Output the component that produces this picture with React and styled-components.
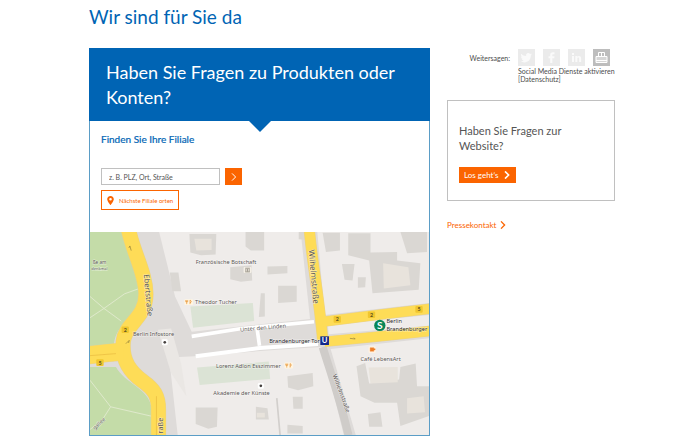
import React, { useState } from 'react';
import styled, { createGlobalStyle, ThemeProvider } from 'styled-components';

const theme = {
  colors: {
    primary: '#0064b4',
    accent: '#fb6400',
    text: '#555',
    border: '#c0c0c0',
    frame: '#5b9dc6',
    muted: '#ebebeb',
  },
};

const GlobalStyle = createGlobalStyle`
  * { box-sizing: border-box; }
  body {
    margin: 0;
    background: #fff;
    font-family: Lato, "Noto Sans", sans-serif;
    color: #4c4c4c;
  }
  button, input { font-family: inherit; }
`;

const Page = styled.div`
  padding: 4px 85px 7px 89px;
`;

const PageTitle = styled.h1`
  margin: 0 0 19px;
  font-size: 19px;
  font-weight: 400;
  line-height: 25px;
  color: ${p => p.theme.colors.primary};
`;

const Columns = styled.div`
  display: grid;
  grid-template-columns: minmax(0, 1fr) 168px;
  align-items: start;
  gap: 17px;
`;

const Card = styled.main`
  border: 1px solid ${p => p.theme.colors.frame};
  border-top: none;
`;

const CardHeader = styled.header`
  position: relative;
  margin: 0 -1px;
  padding: 12px 17px 11px;
  background: ${p => p.theme.colors.primary};
  &::after {
    content: '';
    position: absolute;
    top: 100%;
    left: 50%;
    margin-left: -11px;
    border: 11px solid transparent;
    border-top-color: ${p => p.theme.colors.primary};
    border-bottom: none;
  }
`;

const CardTitle = styled.h2`
  margin: 0;
  font-size: 18px;
  font-weight: 400;
  line-height: 25px;
  color: #fff;
`;

const Finder = styled.form`
  display: flex;
  flex-direction: column;
  align-items: flex-start;
  padding: 10px 11px 22px;
`;

const FinderLabel = styled.label`
  margin-bottom: 21px;
  font-size: 10px;
  line-height: 16px;
  color: ${p => p.theme.colors.primary};
  -webkit-text-stroke: 0.2px;
`;

const SearchRow = styled.div`
  display: flex;
  gap: 5px;
  margin-bottom: 5px;
`;

const SearchInput = styled.input`
  width: 119px;
  height: 17px;
  padding: 0 7px;
  border: 1px solid ${p => p.theme.colors.border};
  border-radius: 0;
  font-size: 7px;
  color: ${p => p.theme.colors.text};
  &::placeholder {
    color: ${p => p.theme.colors.text};
    opacity: 1;
  }
`;

const SearchButton = styled.button`
  display: flex;
  align-items: center;
  justify-content: center;
  width: 17px;
  height: 17px;
  padding: 0;
  border: none;
  background: ${p => p.theme.colors.accent};
  color: #fff;
  cursor: pointer;
`;

const NearestButton = styled.button`
  display: flex;
  align-items: center;
  gap: 5px;
  height: 20px;
  padding: 0 5px;
  border: 1px solid ${p => p.theme.colors.accent};
  background: #fff;
  font-size: 6px;
  color: ${p => p.theme.colors.accent};
  cursor: pointer;
`;

const MapView = styled.svg`
  display: block;
  width: 100%;
  height: auto;
`;

const Sidebar = styled.aside`
  display: flex;
  flex-direction: column;
`;

const Share = styled.section`
  display: flex;
  justify-content: flex-end;
  gap: 8px;
  margin-bottom: 17px;
  font-size: 7px;
  line-height: 8px;
`;

const ShareLabel = styled.span`
  line-height: 20px;
`;

const ShareBody = styled.div`
  width: 97px;
`;

const ShareIcons = styled.div`
  display: flex;
  gap: 8px;
  padding: 1px 0;
`;

const ShareButton = styled.button`
  display: flex;
  width: 17px;
  height: 17px;
  padding: 0;
  border: none;
  background: ${p => (p.$active ? '#bdbdbd' : p.theme.colors.muted)};
  color: ${p => (p.$active ? '#fff' : '#fafafa')};
  cursor: pointer;
`;

const Notice = styled.p`
  margin: 0;
  white-space: nowrap;
`;

const NoticeLink = styled.a`
  color: inherit;
  text-decoration: none;
`;

const Box = styled.section`
  padding: 22px 11px 17px;
  border: 1px solid ${p => p.theme.colors.border};
`;

const BoxTitle = styled.h2`
  margin: 0 0 14px;
  font-size: 11px;
  font-weight: 400;
  line-height: 15px;
  color: ${p => p.theme.colors.text};
`;

const GoButton = styled.button`
  display: flex;
  align-items: center;
  gap: 4px;
  height: 16px;
  padding: 0 5px;
  border: none;
  background: ${p => p.theme.colors.accent};
  font-size: 8px;
  color: #fff;
  cursor: pointer;
`;

const PressLink = styled.a`
  display: flex;
  align-items: center;
  gap: 3px;
  margin-top: 18px;
  font-size: 8px;
  line-height: 12px;
  color: ${p => p.theme.colors.accent};
  text-decoration: none;
`;

const Chevron = ({ size = 8, width = 1.6 }) => (
  <svg width={size} height={size} viewBox="0 0 8 8" fill="none" stroke="currentColor" strokeWidth={width} aria-hidden="true">
    <path d="M2 0.4 5.6 4 2 7.6" />
  </svg>
);

const Pin = () => (
  <svg width="7" height="9" viewBox="0 0 7 9" fill="currentColor" fillRule="evenodd" aria-hidden="true">
    <path d="M3.500 0C1.500 0 .2 1.400.2 3.200.2 5.200 3.500 9 3.500 9S6.800 5.200 6.800 3.200C6.800 1.400 5.500 0 3.500 0ZM3.500 1.900a1.300 1.300 0 1 1 0 2.600 1.300 1.300 0 0 1 0-2.600Z" />
  </svg>
);

const networks = [
  {
    name: 'Twitter',
    icon: <path fill="currentColor" d="M14 5.200c-.5.2-1 .3-1.400.4.500-.3.800-.8 1-1.300-.5.300-1 .5-1.500.6a2.300 2.300 0 0 0-4 2.100C6 7 4.400 6 3.300 4.700c-.6 1-.3 2.300.7 3-.4 0-.7-.1-1-.3 0 1.100.8 2 1.800 2.300-.3.100-.7.1-1 0 .3.900 1.100 1.600 2.100 1.600-1 .8-2 1.100-3.300 1 4.900 2.900 10.400-.3 10.200-5.700.5-.4.900-.8 1.200-1.400Z" />,
  },
  {
    name: 'Facebook',
    icon: <path fill="currentColor" d="M9.300 14V9.300h1.900l.3-2H9.300V6.200c0-.7.300-1 1-1h1.200V3.300c-2.900-.5-4.300.4-4.300 2.700v1.300H5.500v2h1.700V14Z" />,
  },
  {
    name: 'LinkedIn',
    icon: <path fill="currentColor" d="M4 7h2v6H4ZM4 4h2v2H4ZM7.300 7h1.900v.8c1-1.500 3.900-1.200 3.900 1.400V13h-2V9.700c0-1.500-1.800-1.400-1.800 0V13h-2Z" />,
  },
];

const greens = [
  'M6 6H104C118 70 152 120 160 170C168 235 140 262 108 284C88 302 80 322 78 345L6 350Z',
  'M6 412H84C108 458 182 478 190 530V618H6Z',
];

const roads = [
  { d: 'M122 0C138 72 173 130 174 190C176 266 112 280 106 335C100 395 130 430 165 455C200 480 212 500 212 540V624', w: 43 },
  { d: 'M0 377L60 370L106 366', w: 52 },
  { d: 'M666 0C676 110 695 200 706 330', w: 31 },
  { d: 'M706 276L880 254L1030 237', w: 29 },
  { d: 'M712 336L860 322L1030 304', w: 29 },
];

const blocks = [
  '214 6 640 6 668 268 312 306 262 200',
  '690 6 1026 6 1026 220 712 256',
  '722 286 1026 256 1026 288 724 314',
  '244 384 320 380 600 358 704 352 770 618 270 618',
  '730 358 1026 326 1026 618 806 618',
];

const buildings = [
  '305 12 386 12 384 74 340 76 308 68', '474 6 530 6 530 62 490 62 474 50', '634 6 664 6 664 30 634 28',
  '428 112 492 106 494 152 460 156 428 148', '572 168 628 168 628 216 572 220', '246 128 272 128 280 184 254 184',
  '706 8 758 8 758 62 716 66', '783 10 850 10 850 68 930 66 930 92 1000 100 995 180 856 190 846 92 783 76',
  '940 6 1020 6 1020 66 960 70', '764 102 802 102 796 152 772 150', '812 142 836 142 834 172 812 174',
  '324 534 390 534 388 592 362 598 324 584', '600 440 676 430 678 470 632 482 602 474', '616 502 646 502 646 538 618 538',
  '808 410 834 400 846 462 936 450 940 412 986 402 990 470 1026 470 1026 560 940 590 930 520 862 520 820 500',
  '842 554 880 548 886 592 846 592', '540 110 600 108 600 130 540 134', '505 532 540 536 544 570 505 570',
  '600 586 646 590 646 612 600 612', '520 190 532 190 532 260 514 262',
];

const courtyards = [
  '888 100 964 112 970 166 890 176', '844 414 932 412 932 458 850 462', '960 506 1010 500 1014 548 960 552',
  '320 26 372 26 372 60 326 62', '508 550 532 550 532 564 508 564',
];

const labels = [
  { text: 'Französische Botschaft', x: 324, y: 101 },
  { text: 'Theodor Tucher', x: 322, y: 224 },
  { text: 'Berlin Infostore', x: 135, y: 319 },
  { text: 'Lorenz Adlon Esszimmer', x: 385, y: 415 },
  { text: 'Akademie der Künste', x: 377, y: 497 },
  { text: 'Brandenburger Tor', x: 545, y: 339, dark: true },
  { text: 'Café LebensArt', x: 820, y: 393 },
  { text: 'Berlin', x: 898, y: 281, dark: true },
  { text: 'Brandenburger', x: 898, y: 303, dark: true },
  { text: 'Unter den Linden', x: 458, y: 306, rotate: -5 },
  { text: 'Ebertstraße', x: 168, y: 134, rotate: 85, size: 23 },
  { text: 'Wilhelmstraße', x: 664, y: 60, rotate: 85, size: 24 },
  { text: 'Wilhelmstraße', x: 736, y: 436, rotate: 70, size: 18 },
  { text: 'raße', x: 226, y: 612, rotate: -90, size: 22 },
  { text: 'gallee', x: 20, y: 602, rotate: -42, size: 16 },
  { text: 'ße am', x: 14, y: 102, size: 14 },
  { text: 'denkmal', x: 10, y: 121, size: 12 },
];

const shields = [[112, 300, '2'], [36, 399, '5'], [750, 269, '2'], [853, 255, '2'], [996, 239, '5']];

const CityMap = () => (
  <MapView viewBox="6 6 1020 612" role="img" aria-label="Karte von Berlin">
    <rect x="6" y="6" width="1020" height="612" fill="#dedbd9" />
    {blocks.map(b => <polygon key={b} points={b} fill="#efecea" />)}
    {greens.map(g => <path key={g} d={g} fill="#c4dca8" />)}
    <polygon points="308 230 496 220 500 274 316 294" fill="#dbe3d5" />
    <polygon points="328 414 544 396 548 448 336 466" fill="#dbe3d5" />
    <polygon points="210 300 250 296 280 402 296 500 250 430" fill="#eae7e4" />
    {buildings.map(b => <polygon key={b} points={b} fill="#dad7d3" />)}
    {courtyards.map(c => <polygon key={c} points={c} fill="#e8e3dc" />)}
    <g fill="none" stroke="#dfe9cc" strokeWidth="3">
      <path d="M6 200L48 236L100 274M48 236L110 192L160 174M6 264L48 236" />
      <path d="M6 452L68 532L190 560M68 532L40 576L6 600" />
    </g>
    <path d="M706 352C730 430 756 500 784 618" fill="none" stroke="#cfccc9" strokeWidth="24" />
    <path d="M568 506L578 618" fill="none" stroke="#d2cfcc" strokeWidth="5" />
    {roads.map(r => <path key={r.d} d={r.d} fill="none" stroke="#ead287" strokeWidth={r.w + 3} />)}
    {roads.map(r => <path key={r.d} d={r.d} fill="none" stroke="#fedc57" strokeWidth={r.w} />)}
    <path d="M6 378L84 372M206 500V618" fill="none" stroke="#e9b93f" strokeWidth="2" />
    <g fill="none" stroke="#fff">
      <path d="M312 320L458 297L680 276M508 292L516 348" strokeWidth="11" />
      <path d="M324 380L516 355L692 343" strokeWidth="12" />
    </g>
    {shields.map(([x, y, n]) => (
      <g key={`${x}-${y}`}>
        <rect x={x - 11} y={y - 10} width="22" height="20" rx="3" fill="#f0c62f" />
        <text x={x} y={y + 6} fontSize="16" fontWeight="700" textAnchor="middle" fill="#5f5320">{n}</text>
      </g>
    ))}
    <g fill="none" stroke="#8e7c3a" strokeWidth="2">
      <path d="M126 48L130 62M126 48L123 54M114 342L124 332L122 340M788 326L804 328L800 324" />
    </g>
    {labels.map(l => (
      <text
        key={`${l.text}-${l.x}`}
        transform={`translate(${l.x} ${l.y}) rotate(${l.rotate || 0})`}
        fontSize={l.size || 17}
        fill={l.dark ? '#28282c' : '#5a5654'}
        stroke="#fff"
        strokeOpacity="0.5"
        strokeWidth="3"
        paintOrder="stroke"
        fontFamily='"Noto Sans", sans-serif'
      >
        {l.text}
      </text>
    ))}
    {[[303, 217], [604, 408]].map(([x, y]) => (
      <g key={x}>
        <rect x={x - 13} y={y - 9} width="26" height="18" rx="3" fill="#fff5e2" />
        <path d={`M${x - 6} ${y - 6}v12M${x - 9} ${y - 6}v5h6v-5M${x + 4} ${y + 6}v-12c5 2 5 7 0 8`} fill="none" stroke="#e7902c" strokeWidth="2" />
      </g>
    ))}
    {[[231, 338], [520, 469]].map(([x, y]) => (
      <g key={x}>
        <rect x={x - 9} y={y - 9} width="18" height="18" rx="4" fill="#fff" />
        <circle cx={x} cy={y} r="4" fill="#45403e" />
      </g>
    ))}
    <rect x="468" y="111" width="24" height="18" rx="3" fill="#f5f0e7" />
    <path d="M473 115H487M475 117V125M480 117V125M485 117V125M473 126H487" stroke="#7a7468" strokeWidth="2" />
    <rect x="844" y="350" width="22" height="20" rx="4" fill="#fff2e2" />
    <path d="M849 354H860V365H849ZM860 357H864V361H860" fill="#ee7f28" stroke="#ee7f28" />
    <circle cx="878" cy="287" r="17" fill="#078658" />
    <text x="878" y="298" fontSize="31" fontWeight="700" textAnchor="middle" fill="#fff">S</text>
    <rect x="699" y="320" width="26" height="26" fill="#14288c" />
    <text x="712" y="341" fontSize="23" fontWeight="700" textAnchor="middle" fill="#fff">U</text>
  </MapView>
);

export default function App() {
  const [query, setQuery] = useState('');

  return (
    <ThemeProvider theme={theme}>
      <GlobalStyle />
      <Page>
        <PageTitle>Wir sind für Sie da</PageTitle>
        <Columns>
          <Card>
            <CardHeader>
              <CardTitle>Haben Sie Fragen zu Produkten oder Konten?</CardTitle>
            </CardHeader>
            <Finder onSubmit={e => e.preventDefault()}>
              <FinderLabel htmlFor="branch">Finden Sie Ihre Filiale</FinderLabel>
              <SearchRow>
                <SearchInput
                  id="branch"
                  value={query}
                  onChange={e => setQuery(e.target.value)}
                  placeholder="z. B. PLZ, Ort, Straße"
                />
                <SearchButton type="submit" aria-label="Suchen">
                  <Chevron width={1} />
                </SearchButton>
              </SearchRow>
              <NearestButton type="button">
                <Pin />
                Nächste Filiale orten
              </NearestButton>
            </Finder>
            <CityMap />
          </Card>

          <Sidebar>
            <Share>
              <ShareLabel>Weitersagen:</ShareLabel>
              <ShareBody>
                <ShareIcons>
                  {networks.map(n => (
                    <ShareButton key={n.name} type="button" aria-label={n.name}>
                      <svg width="17" height="17" viewBox="0 0 17 17">{n.icon}</svg>
                    </ShareButton>
                  ))}
                  <ShareButton $active type="button" aria-label="Aktivieren">
                    <svg width="17" height="17" viewBox="0 0 17 17" fill="none" stroke="currentColor">
                      <path d="M3 7.500H14V13.500H3Z" fill="#d6d6d6" />
                      <path d="M5.500 7V3.500H11.500V7M8.500 4V7M3 11.500H14" />
                    </svg>
                  </ShareButton>
                </ShareIcons>
                <Notice>
                  Social Media Dienste aktivieren<br />
                  <NoticeLink href="#datenschutz">[Datenschutz]</NoticeLink>
                </Notice>
              </ShareBody>
            </Share>
            <Box>
              <BoxTitle>Haben Sie Fragen zur Website?</BoxTitle>
              <GoButton type="button">
                Los geht‘s
                <Chevron />
              </GoButton>
            </Box>
            <PressLink href="#presse">
              Pressekontakt
              <Chevron width={1.3} />
            </PressLink>
          </Sidebar>
        </Columns>
      </Page>
    </ThemeProvider>
  );
}
